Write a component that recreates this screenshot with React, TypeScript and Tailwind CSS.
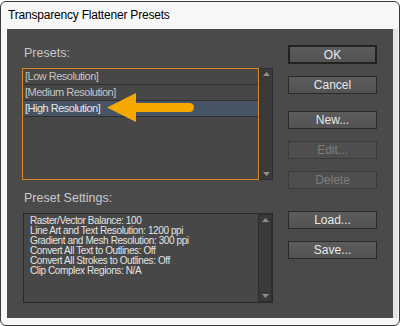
import React from "react";

const presets = ["[Low Resolution]", "[Medium Resolution]", "[High Resolution]"];

const settings = [
  "Raster/Vector Balance: 100",
  "Line Art and Text Resolution: 1200 ppi",
  "Gradient and Mesh Resolution: 300 ppi",
  "Convert All Text to Outlines: Off",
  "Convert All Strokes to Outlines: Off",
  "Clip Complex Regions: N/A",
];

const UpArrow = () => (
  <svg width="7" height="4" viewBox="0 0 7 4">
    <polygon points="3.5,0 7,4 0,4" fill="#8f8f8f" />
  </svg>
);

const DownArrow = () => (
  <svg width="7" height="4" viewBox="0 0 7 4">
    <polygon points="0,0 7,0 3.5,4" fill="#8f8f8f" />
  </svg>
);

const ScrollBar = () => (
  <div className="w-[14px] h-full bg-[#3a3a3a] border border-[#2e2e2e] flex flex-col items-center justify-between py-[3px]">
    <UpArrow />
    <DownArrow />
  </div>
);

interface ButtonProps {
  label: string;
  disabled?: boolean;
  primary?: boolean;
  className?: string;
}

const DialogButton: React.FunctionComponent<ButtonProps> = ({
  label,
  disabled,
  primary,
  className,
}) => (
  <div
    className={`w-[89px] flex items-center justify-center text-[12px] leading-none ${
      primary
        ? "h-[19px] border-2 border-[#222222] bg-gradient-to-b from-[#5c5c5c] to-[#525252] text-[#ececec]"
        : disabled
        ? "h-[18px] border border-[#3b3b3b] bg-[#4e4e4e] text-[#7d7d7d]"
        : "h-[18px] border border-[#2a2a2a] bg-gradient-to-b from-[#5c5c5c] to-[#525252] text-[#e8e8e8]"
    } ${className ?? ""}`}
  >
    {label}
  </div>
);

const App: React.FunctionComponent = () => {
  return (
    <div className="w-[401px] h-[326px] bg-white font-['Liberation_Sans',Arial,sans-serif]">
      <div className="mt-[1px] w-[400px] h-[325px] border border-[#3a3a3a] rounded-[6px] bg-[#f7f7f7] overflow-hidden">
        <div className="h-[27px] pl-[7px] pt-[5px] text-[12px] leading-[16px] tracking-[-0.2px] text-black">
          Transparency Flattener Presets
        </div>
        <div className="ml-[6px] w-[391px] h-[289px] bg-[#4a4a4a] border-r-[5px] border-[#e3e3e3] flex">
          {/* left column */}
          <div className="pl-[15px] pt-[17px] w-[266px] shrink-0">
            <div className="pl-[2px] h-[15px] text-[12.5px] leading-[15px] text-[#c9c9c9]">
              Presets:
            </div>
            <div className="mt-[7px] h-[112px] w-[251px] flex">
              <div className="relative w-[237px] h-full border border-[#d98a2b] bg-[#474747]">
                {presets.map((preset, i) => (
                  <div
                    key={preset}
                    className={`h-[16px] border-b border-[#2f2f2f] pl-[2px] flex items-center text-[11px] tracking-[-0.5px] ${
                      i === 2 ? "bg-[#475466] text-[#e6e6e6]" : "text-[#c4c4c4]"
                    }`}
                  >
                    {preset}
                  </div>
                ))}
                <svg
                  className="absolute left-[84px] top-[24px]"
                  width="88"
                  height="30"
                  viewBox="0 0 88 30"
                >
                  <polygon points="0,14.5 29,0 29,29" fill="#f6a800" />
                  <rect x="26" y="10" width="61" height="9" rx="4.5" fill="#f6a800" />
                </svg>
              </div>
              <ScrollBar />
            </div>
            <div className="mt-[11px] pl-[2px] h-[15px] text-[12.5px] leading-[15px] text-[#c9c9c9]">
              Preset Settings:
            </div>
            <div className="mt-[7px] ml-[1px] w-[250px] h-[90px] border border-[#2a2a2a] bg-[#474747] flex">
              <div className="flex-1 pl-[6px] pt-[2px] text-[10px] leading-[10px] tracking-[-0.4px] text-[#e4e4e4]">
                {settings.map((line) => (
                  <div key={line}>{line}</div>
                ))}
              </div>
              <ScrollBar />
            </div>
          </div>
          {/* buttons */}
          <div className="ml-[15px] pt-[16px] flex flex-col">
            <DialogButton label="OK" primary />
            <DialogButton label="Cancel" className="mt-[12px]" />
            <DialogButton label="New..." className="mt-[17px]" />
            <DialogButton label="Edit..." disabled className="mt-[12px]" />
            <DialogButton label="Delete" disabled className="mt-[12px]" />
            <DialogButton label="Load..." className="mt-[22px]" />
            <DialogButton label="Save..." className="mt-[12px]" />
          </div>
        </div>
      </div>
    </div>
  );
};

export default App;
